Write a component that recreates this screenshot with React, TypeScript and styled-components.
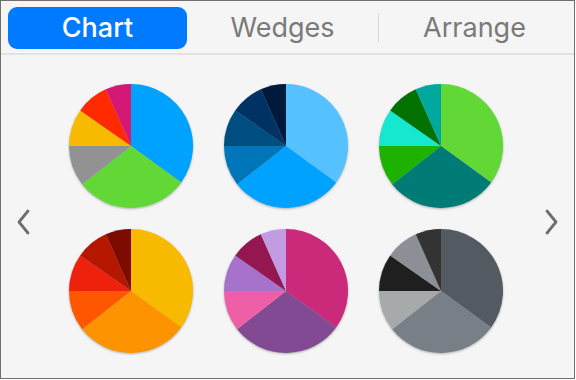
import styled, {createGlobalStyle} from 'styled-components';


const GlobalStyle = createGlobalStyle`
    html, body {
        margin: 0;
        padding: 0;
        background: #ffffff;
    }
    body {
        font-family: Inter, "Liberation Sans", sans-serif;
    }
`;


// each pie has the same wedges, only the palette changes
const ANGLES = [126, 106, 38, 35, 31, 24];

const PALETTES: string[][] = [
    ['#00a2ff', '#61d836', '#929292', '#f8ba00', '#ff2a00', '#d31876'],
    ['#56c1ff', '#00a2ff', '#0076ba', '#004d80', '#003263', '#001a3c'],
    ['#61d836', '#017b76', '#1db100', '#16e7cf', '#017100', '#00a89d'],
    ['#f8ba00', '#fe9300', '#ff5700', '#ee220c', '#b51700', '#7e0b00'],
    ['#cb2a7b', '#814a92', '#ef5fa7', '#a672cc', '#941751', '#c29be3'],
    ['#535a61', '#797f87', '#a7aaab', '#1f1f1f', '#8c9096', '#333333'],
];

const SIZE = 124;
const R = SIZE / 2;

const point = (deg: number) => {
    const rad = (deg - 90) * Math.PI / 180;
    return `${R + R * Math.cos(rad)} ${R + R * Math.sin(rad)}`;
};


/**
 * 一個圓餅圖
 */
const Pie = ({colors}: {colors: string[]}) => {
    let start = 0;

    return <PieSvg viewBox={`0 0 ${SIZE} ${SIZE}`}>
        {ANGLES.map((angle, i) => {
            const end = start + angle;
            const d = `M ${R} ${R} L ${point(start)} A ${R} ${R} 0 ${angle > 180 ? 1 : 0} 1 ${point(end)} Z`;
            start = end;
            return <path key={i} d={d} fill={colors[i]}/>;
        })}
    </PieSvg>;
};


const Chevron = ({dir}: {dir: 'left' | 'right'}) => (
    <ArrowSvg viewBox="0 0 14 26" $dir={dir}>
        <path d="M11 2 L2 13 L11 24" fill="none" stroke="#6e6e6e" strokeWidth="2.8" strokeLinecap="round" strokeLinejoin="round"/>
    </ArrowSvg>
);


const App = () => {
    return <>
        <GlobalStyle/>
        <Frame>
            <TabBar>
                <Tab $active>Chart</Tab>
                <Tab>Wedges</Tab>
                <Divider/>
                <Tab>Arrange</Tab>
            </TabBar>

            <Content>
                <Chevron dir="left"/>
                <PieGrid>
                    {PALETTES.map((colors, i) => <Pie key={i} colors={colors}/>)}
                </PieGrid>
                <Chevron dir="right"/>
            </Content>
        </Frame>
    </>;
};

export default App;





const Frame = styled.div`
    width: 575px;
    height: 379px;
    box-sizing: border-box;
    border: 1px solid #6f6f6f;
    background: #f5f5f5;
    display: flex;
    flex-direction: column;
    overflow: hidden;
`;

const TabBar = styled.div`
    display: grid;
    grid-template-columns: 179px 191px 1px 1fr;
    align-items: center;
    height: 52px;
    padding: 0 4px 0 7px;
    border-bottom: 2px solid #e2e2e2;
`;

const Tab = styled.div<{$active?: boolean}>`
    height: 42px;
    margin-top: 1px;
    display: flex;
    align-items: center;
    justify-content: center;
    border-radius: 9px;
    font-size: 27px;
    font-weight: ${p => p.$active ? 500 : 400};
    color: ${p => p.$active ? '#ffffff' : '#7a7a7a'};
    background: ${p => p.$active ? '#007aff' : 'transparent'};
`;

const Divider = styled.div`
    height: 29px;
    background: #d9d9d9;
`;

const Content = styled.div`
    flex: 1;
    display: flex;
    align-items: flex-start;
    padding: 29px 0 0 0;
`;

const PieGrid = styled.div`
    display: grid;
    grid-template-columns: repeat(3, ${SIZE}px);
    column-gap: 31px;
    row-gap: 21px;
    margin: 0 0 0 38px;
`;

const PieSvg = styled.svg`
    width: ${SIZE}px;
    height: ${SIZE}px;
    display: block;
    filter: drop-shadow(0 1px 1px rgba(0, 0, 0, 0.28));
`;

const ArrowSvg = styled.svg<{$dir: 'left' | 'right'}>`
    width: 14px;
    height: 26px;
    flex: none;
    margin-top: 125px;
    margin-left: ${p => p.$dir === 'left' ? '16px' : '41px'};
    transform: ${p => p.$dir === 'right' ? 'scaleX(-1)' : 'none'};
`;
